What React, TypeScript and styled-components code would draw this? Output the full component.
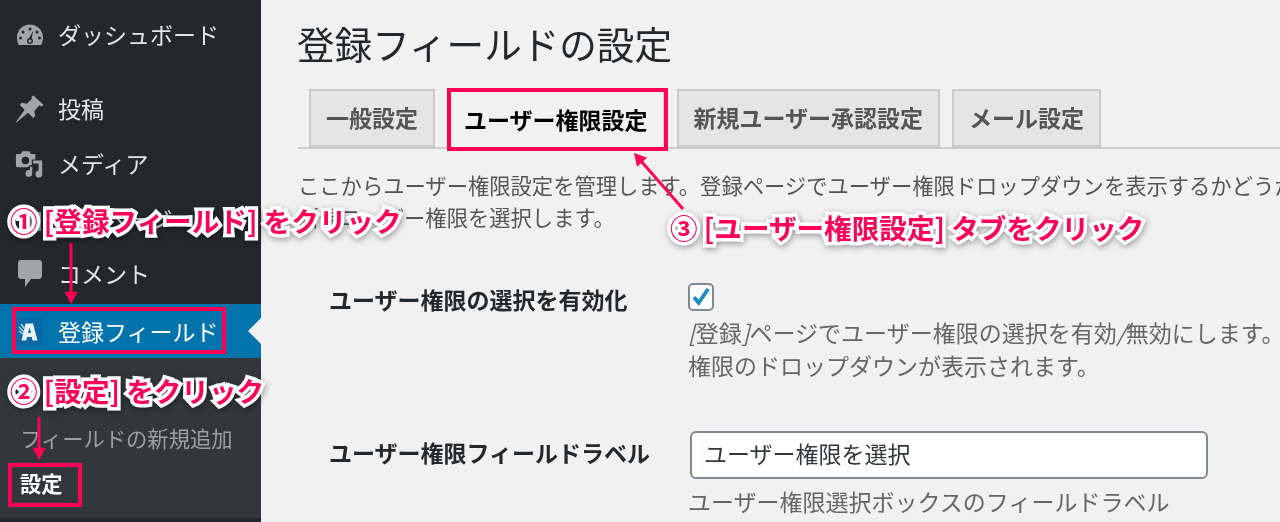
import React from "react";
import styled, { createGlobalStyle } from "styled-components";

const Global = createGlobalStyle`
  html, body { margin: 0; padding: 0; background: #f1f1f1; }
  body { font-family: "Noto Sans CJK JP", "Liberation Sans", sans-serif; }
`;

const Page = styled.div`
  position: relative;
  display: grid;
  grid-template-columns: 261px 1fr;
  width: 1280px;
  height: 522px;
  overflow: hidden;
  background: #f1f1f1;
  filter: blur(0.35px);
`;

const Sidebar = styled.nav`
  background: #23282d;
  display: flex;
  flex-direction: column;
  padding-top: 7px;
`;

const MenuItem = styled.div<{ $gap?: number }>`
  height: 55px;
  flex: none;
  display: flex;
  align-items: center;
  gap: 14px;
  padding-left: 15px;
  margin-bottom: ${(p) => p.$gap ?? 0}px;
  color: #e4e5e6;
  font-size: 23px;
  line-height: 1;
`;

const ActiveItem = styled(MenuItem)`
  position: relative;
  background: #0073aa;
  color: #fff;
  height: 54px;
  margin-top: 3px;
  &::after {
    content: "";
    position: absolute;
    right: 0;
    top: 14px;
    border: 13px solid transparent;
    border-right-color: #f1f1f1;
    border-left-width: 0;
  }
`;

const IconSlot = styled.span`
  width: 29px;
  height: 29px;
  flex: none;
  display: flex;
  align-items: center;
  justify-content: center;
  color: #a0a5aa;
`;

const SubMenu = styled.div`
  background: #32373c;
  height: 160px;
  flex: none;
  display: flex;
  flex-direction: column;
  justify-content: flex-end;
  padding-bottom: 13px;
  box-sizing: border-box;
`;

const SubItem = styled.div<{ $current?: boolean }>`
  height: 45px;
  display: flex;
  align-items: center;
  padding-left: 20px;
  font-size: 21.3px;
  color: ${(p) => (p.$current ? "#fff" : "#9b9fa3")};
  font-weight: ${(p) => (p.$current ? 700 : 400)};
`;

const Main = styled.main`
  padding: 18px 0 0 37px;
  min-width: 0;
  overflow: hidden;
`;

const Title = styled.h1`
  margin: 0;
  height: 50px;
  margin-left: -1px;
  font-size: 37.6px;
  line-height: 50px;
  font-weight: 400;
  color: #23282d;
  white-space: nowrap;
`;

const Tabs = styled.div`
  display: flex;
  gap: 12px;
  margin-top: 21px;
  height: 58px;
  padding-left: 11px;
  border-bottom: 2px solid #ccc;
`;

const Tab = styled.div<{ $active?: boolean }>`
  box-sizing: border-box;
  height: ${(p) => (p.$active ? 60 : 58)}px;
  padding: 0 15px 2px;
  display: flex;
  align-items: center;
  font-size: 23px;
  font-weight: 700;
  border: 2px solid #ccc;
  border-bottom: ${(p) => (p.$active ? "none" : "2px solid #ccc")};
  color: ${(p) => (p.$active ? "#000" : "#555")};
  background: ${(p) => (p.$active ? "#f1f1f1" : "#e5e5e5")};
  white-space: nowrap;
`;

const Intro = styled.p`
  margin: 20px 0 0;
  font-size: 21.3px;
  line-height: 32px;
  color: #555;
  white-space: nowrap;
`;

const FormGrid = styled.div`
  display: flex;
  flex-direction: column;
  gap: 49px;
  padding-left: 31px;
  margin-top: 50px;
`;

const FormRow = styled.div`
  display: grid;
  grid-template-columns: 359px 1fr;
`;

const RowLabel = styled.div<{ $top: number }>`
  font-size: 23px;
  font-weight: 700;
  line-height: 32px;
  padding-top: ${(p) => p.$top}px;
  color: #23282d;
  white-space: nowrap;
`;

const Field = styled.div`
  color: #666;
  font-size: 23px;
  line-height: 33px;
  white-space: nowrap;
  min-width: 0;
`;

const CheckBox = styled.span`
  display: flex;
  align-items: center;
  justify-content: center;
  box-sizing: border-box;
  width: 26px;
  height: 28px;
  background: #fff;
  border: 2px solid #7e8993;
  border-radius: 5px;
  margin-bottom: 5px;
`;

const EmItalic = styled.em`
  font-style: italic;
`;

const TextBox = styled.div`
  box-sizing: border-box;
  width: 518px;
  height: 48px;
  background: #fff;
  border: 2px solid #7e8993;
  border-radius: 6px;
  padding: 0 0 3px 12px;
  margin: 0 0 6px 2px;
  display: flex;
  align-items: center;
  font-size: 23px;
  color: #32373c;
`;

const Overlay = styled.svg`
  position: absolute;
  inset: 0;
  pointer-events: none;
`;

const Callout = styled.div<{ $x: number; $y: number }>`
  position: absolute;
  left: ${(p) => p.$x}px;
  top: ${(p) => p.$y}px;
  font-size: 27.6px;
  line-height: 36px;
  font-weight: 700;
  color: #ff0055;
  white-space: nowrap;
  -webkit-text-stroke: 7px #fff;
  paint-order: stroke fill;
  filter: drop-shadow(1px 2px 3px rgba(0, 0, 0, 0.35));
`;

const Highlight = styled.div<{ $x: number; $y: number; $w: number; $h: number }>`
  position: absolute;
  left: ${(p) => p.$x}px;
  top: ${(p) => p.$y}px;
  width: ${(p) => p.$w}px;
  height: ${(p) => p.$h}px;
  box-sizing: border-box;
  border: 4px solid #ff0055;
`;

const Gauge = () => (
  <svg width="28" height="24" viewBox="0 0 28 24">
    <path
      fill="currentColor"
      fillRule="evenodd"
      d="M14 1.500C6.800 1.500 1 7.300 1 14.500c0 2.700.7 5.200 1.800 7.500h22.400c1.100-2.300 1.800-4.800 1.800-7.500C27 7.300 21.200 1.500 14 1.500zM14 4.500a1.500 1.500 0 1 1 0 3 1.500 1.500 0 0 1 0-3zM7 7.500a1.500 1.500 0 1 1 0 3 1.500 1.500 0 0 1 0-3zM21 7.500a1.500 1.500 0 1 1 0 3 1.500 1.500 0 0 1 0-3zM4.500 13.500a1.500 1.500 0 1 1 0 3 1.500 1.500 0 0 1 0-3zM23.500 13.500a1.500 1.500 0 1 1 0 3 1.500 1.500 0 0 1 0-3zM17 8l-1.200 7.500c.8.500 1.200 1.400 1.200 2.500 0 1.700-1.300 3-3 3s-3-1.300-3-3c0-1.500 1-2.700 2.300-2.900zM14 16.500a1.500 1.500 0 1 0 0 3 1.500 1.500 0 0 0 0-3z"
    />
  </svg>
);

const Pin = () => (
  <svg width="30" height="30" viewBox="0 0 30 30">
    <path
      fill="currentColor"
      d="M19 1l10.500 9.500-2 1.800-2.500-.8-5 5.500 1 5-2.200 2.200-5.300-5.200L1.500 29 1 28.500 10 15.800l-5-5 2-2.200 5.300 1 5.200-5.200-.5-2z"
    />
  </svg>
);

const Media = () => (
  <svg width="32" height="30" viewBox="0 0 32 30">
    <path
      fill="currentColor"
      fillRule="evenodd"
      d="M8 1h8l1.500 3H21c1 0 1.500.7 1.500 1.500V10h-4v6h-1l-4 2.500H2.500C1.500 18.500 1 17.700 1 17V5.500C1 4.600 1.600 4 2.500 4h4zM11.500 7a4.200 4.200 0 1 0 0 8.400 4.200 4.200 0 0 0 0-8.400z"
    />
    <path
      fill="currentColor"
      d="M20 11h10v15a3.700 3.700 0 1 1-4-3.500V14.500h-6zM19 18v7a3.700 3.700 0 1 1-3.500-3.300c.5 0 .8 0 1 .1V18z"
    />
  </svg>
);

const Pages = () => (
  <svg width="26" height="28" viewBox="0 0 26 28">
    <path fill="currentColor" d="M2 2h15v3H6v19H2zM8 7h16v19H8z" />
  </svg>
);

const Comment = () => (
  <svg width="26" height="30" viewBox="0 0 26 30">
    <path
      fill="currentColor"
      d="M4 1h18c1.700 0 3 1.300 3 3v13c0 1.700-1.300 3-3 3h-8l-6 8v-8H4c-1.700 0-3-1.300-3-3V4c0-1.700 1.300-3 3-3z"
    />
  </svg>
);

const Logo = () => (
  <svg width="29" height="29" viewBox="0 0 29 29">
    <rect x="1" y="1" width="27" height="27" rx="3" fill="#0a68a6" />
    <path fill="#e8f2f8" fillRule="evenodd" d="M10.500 6.500h7.500l4.500 17h-5l-.7-3.500h-4.800l-.7 3.500H6.500zM13 16h3l-1.500-5.500z" />
    <path stroke="#b9d5e6" strokeWidth="1.500" d="M4 10l5 5M4 14l4 3M6 7l3.500 4.500" />
  </svg>
);

const Check = () => (
  <svg width="20" height="20" viewBox="0 0 20 20">
    <path fill="#1e8cbe" d="M7.800 19L1.500 11.500l3-2.400 3.100 3.700L15.500 1l3.200 2.100z" />
  </svg>
);

const Arrow = ({ x1, y1, x2, y2 }: { x1: number; y1: number; x2: number; y2: number }) => {
  const a = Math.atan2(y2 - y1, x2 - x1);
  const l = 14;
  const w = 0.5;
  const p1 = `${x2 - l * Math.cos(a - w)},${y2 - l * Math.sin(a - w)}`;
  const p2 = `${x2 - l * Math.cos(a + w)},${y2 - l * Math.sin(a + w)}`;
  return (
    <g>
      <line x1={x1} y1={y1} x2={x2 - 8 * Math.cos(a)} y2={y2 - 8 * Math.sin(a)} stroke="#ff0055" strokeWidth="3" />
      <polygon points={`${x2},${y2} ${p1} ${p2}`} fill="#ff0055" />
    </g>
  );
};

export default function App() {
  return (
    <Page>
      <Global />
      <Sidebar>
        <MenuItem $gap={19}>
          <IconSlot><Gauge /></IconSlot>ダッシュボード
        </MenuItem>
        <MenuItem>
          <IconSlot><Pin /></IconSlot>投稿
        </MenuItem>
        <MenuItem>
          <IconSlot><Media /></IconSlot>メディア
        </MenuItem>
        <MenuItem>
          <IconSlot><Pages /></IconSlot>固定ページ
        </MenuItem>
        <MenuItem>
          <IconSlot><Comment /></IconSlot>コメント
        </MenuItem>
        <ActiveItem>
          <IconSlot><Logo /></IconSlot>登録フィールド
        </ActiveItem>
        <SubMenu>
          <SubItem>フィールドの新規追加</SubItem>
          <SubItem $current>設定</SubItem>
        </SubMenu>
      </Sidebar>
      <Main>
        <Title>登録フィールドの設定</Title>
        <Tabs>
          <Tab>一般設定</Tab>
          <Tab $active>ユーザー権限設定</Tab>
          <Tab>新規ユーザー承認設定</Tab>
          <Tab>メール設定</Tab>
        </Tabs>
        <Intro>
          ここからユーザー権限設定を管理します。登録ページでユーザー権限ドロップダウンを表示するかどうか
          <br />
          新規ユーザー権限を選択します。
        </Intro>
        <FormGrid>
          <FormRow>
            <RowLabel $top={0}>ユーザー権限の選択を有効化</RowLabel>
            <Field>
              <CheckBox><Check /></CheckBox>
              <EmItalic>[</EmItalic>登録<EmItalic>]</EmItalic>ページでユーザー権限の選択を有効<EmItalic>/</EmItalic>無効にします。
              <br />
              権限のドロップダウンが表示されます。
            </Field>
          </FormRow>
          <FormRow>
            <RowLabel $top={5}>ユーザー権限フィールドラベル</RowLabel>
            <Field>
              <TextBox>ユーザー権限を選択</TextBox>
              ユーザー権限選択ボックスのフィールドラベル
            </Field>
          </FormRow>
        </FormGrid>
      </Main>

      <Highlight $x={12} $y={307} $w={214} $h={47} />
      <Highlight $x={8} $y={463} $w={74} $h={44} />
      <Highlight $x={447} $y={88} $w={221} $h={63} />
      <Overlay width="1280" height="522" viewBox="0 0 1280 522">
        <Arrow x1={71} y1={243} x2={71} y2={304} />
        <Arrow x1={39} y1={417} x2={39} y2={460} />
        <Arrow x1={683} y1={209} x2={634} y2={153} />
      </Overlay>
      <Callout $x={10} $y={202}>① [登録フィールド] をクリック</Callout>
      <Callout $x={10} $y={372}>② [設定] をクリック</Callout>
      <Callout $x={670} $y={209}>③ [ユーザー権限設定] タブをクリック</Callout>
    </Page>
  );
}
